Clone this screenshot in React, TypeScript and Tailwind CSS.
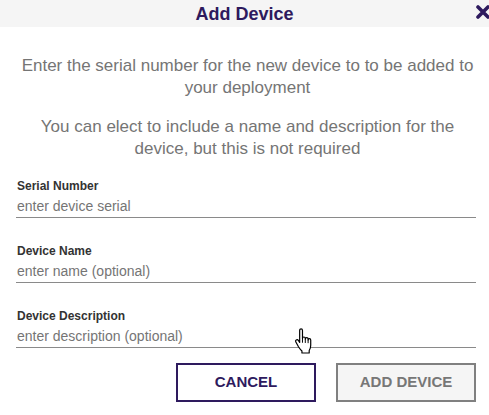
import React from 'react';

const fields = [
  { label: 'Serial Number', placeholder: 'enter device serial' },
  { label: 'Device Name', placeholder: 'enter name (optional)' },
  { label: 'Device Description', placeholder: 'enter description (optional)' },
];

function HandCursor() {
  return (
    <svg width="20" height="26" viewBox="0 0 18 24" className="absolute left-[294px] top-[328px] pointer-events-none">
      <path
        d="M5 2.2c0-.9.6-1.4 1.3-1.4s1.3.5 1.3 1.4v7.4c0-.8.6-1.3 1.3-1.3s1.3.5 1.3 1.3v.6c0-.8.6-1.3 1.3-1.3s1.3.5 1.3 1.3v.8c0-.8.6-1.2 1.2-1.2s1.2.5 1.2 1.3v4.8c0 2.4-.6 3.7-1.4 4.9v2.3H7.1v-1.9c-1.2-1-2.2-2.3-3.2-3.9L1.5 13c-.5-.8-.3-1.6.3-2 .7-.4 1.5-.2 2 .5L5 13.3V2.2z"
        fill="#fff"
        stroke="#000"
        strokeWidth="1.1"
        strokeLinejoin="round"
      />
      <path d="M7.6 9.6v4M10.2 10.2v3.6M12.8 10.8v3.2" stroke="#000" strokeWidth="0.9" />
    </svg>
  );
}

export default function App() {
  return (
    <div className="relative w-[489px] h-[415px] bg-white overflow-hidden font-['Liberation_Sans']">
      <header className="relative h-[27px] bg-[#f5f5f5] flex items-center justify-center">
        <h1 className="text-[18px] font-bold text-[#2e1a5e] leading-none">Add Device</h1>
        <svg width="14" height="14" viewBox="0 0 14 14" className="absolute left-[476px] top-[5px]">
          <path d="M2 2L12 12M12 2L2 12" stroke="#2e1a5e" strokeWidth="3.6" strokeLinecap="round" />
        </svg>
      </header>

      <div className="pl-[16px] pr-[13px] pt-[28px]">
        <div className="pl-[3px] text-center text-[17px] leading-[22px] text-[#757575]">
          <p>Enter the serial number for the new device to to be added to your deployment</p>
          <p className="mt-[17px]">You can elect to include a name and description for the device, but this is not required</p>
        </div>

        <div className="mt-[19px] flex flex-col gap-[26px]">
          {fields.map((f) => (
            <div key={f.label} className="flex flex-col">
              <label className="text-[12px] leading-[14px] font-bold text-[#333] pl-[1px]">{f.label}</label>
              <input
                className="h-[25px] pt-[1px] pl-[1px] text-[14px] text-[#333] placeholder:text-[#757575] border-b border-[#8a8a8a] outline-none bg-transparent"
                placeholder={f.placeholder}
              />
            </div>
          ))}
        </div>

        <div className="mt-[15px] flex justify-end gap-[20px]">
          <button className="w-[140px] h-[39px] border-2 border-[#2e1a5e] bg-white text-[15px] font-bold text-[#2e1a5e]">
            CANCEL
          </button>
          <button className="w-[140px] h-[39px] border-2 border-[#808080] bg-[#f5f5f5] text-[15px] font-bold text-[#777]">
            ADD DEVICE
          </button>
        </div>
      </div>

      <HandCursor />
    </div>
  );
}
